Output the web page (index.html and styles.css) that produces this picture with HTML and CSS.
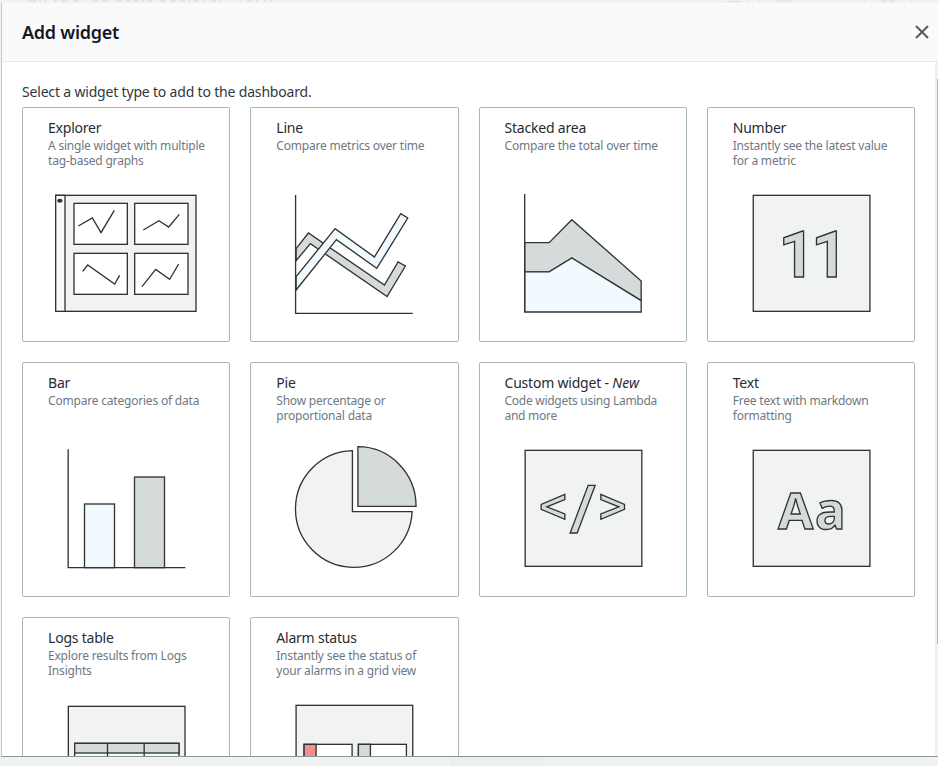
FILE: index.html
```html
<!DOCTYPE html>
<html lang="en">
<head>
<meta charset="utf-8">
<title>Add widget</title>
<link rel="stylesheet" href="styles.css">
</head>
<body>
<div class="page">
  <svg class="backdrop-top" viewBox="0 0 938 3" aria-hidden="true">
    <path d="M28 1h8M39 1h2M45 1h2M54 1h3M61 1h6M73 1h5M93 1h5M102 1h6M116 1h6M126 1h5M134 1h5M142 1h2M147 1h6M160 1h6M170 1h6M180 1h5M188 1h2M194 1h5M204 1h2M211 1h5M219 1h2M239 1h2M247 1h5M256 1h2M264 1h2M270 1h3"/>
    <path d="M727 1.5h14M777 1h14M881 1h6M889 1h6"/>
    <path class="thin" d="M748.500 0v2M759.500 0v2M806.500 0v2M853.500 0v2M864.500 0v2M911.500 0v2"/>
  </svg>
  <section class="modal" role="dialog" aria-label="Add widget">
    <header class="modal-header">
      <h1>Add widget</h1>
      <button class="close" aria-label="Close">
        <svg viewBox="0 0 16 16" width="16" height="16"><path d="M2 2l12 12M14 2L2 14"/></svg>
      </button>
    </header>
    <div class="modal-main">
      <div class="modal-body">
        <p class="intro">Select a widget type to add to the dashboard.</p>
        <div class="grid">
          <article class="card">
            <h2>Explorer</h2>
            <p>A single widget with multiple tag-based graphs</p>
            <svg class="art" viewBox="99 270 468 390">
              <rect class="pale" x="122" y="286" width="421" height="348"/>
              <rect class="offwhite" x="122" y="286" width="28" height="348"/>
              <ellipse class="dot" cx="134.500" cy="302" rx="8" ry="6"/>
              <g class="white"><rect x="177" y="310" width="160" height="123"/><rect x="359" y="310" width="160" height="123"/><rect x="177" y="460" width="160" height="123"/><rect x="359" y="460" width="160" height="123"/></g>
              <path class="line" d="M190 378l42-24 26 44 40-67M385 390l47-28 29 19 32-38M203 514l15-19 81 57 15-26M381 560l41-52 42 30 27-46"/>
            </svg>
          </article>
          <article class="card">
            <h2>Line</h2>
            <p>Compare metrics over time</p>
            <svg class="art" viewBox="99.750 270 468 390">
              <path class="grey" d="M160 446L197 399 425 555 466 486 488 498 433 590 203 431 160 482Z"/>
              <path class="blue" d="M160 530L277 386 395 471 474 341 495 354 402 505 281 419 160 570Z"/>
              <path class="line" d="M158.500 285V640H510"/>
            </svg>
          </article>
          <article class="card">
            <h2>Stacked area</h2>
            <p>Compare the total over time</p>
            <svg class="art" viewBox="105.500 270 468 390">
              <path class="grey" d="M164.500 428H238L306 359 514 543V602L306 474 238 515.500H164.500Z"/>
              <path class="blue" d="M164.500 515.500H238L306 474 514 602V636H164.500Z"/>
              <path class="line" d="M164.500 282V636"/>
            </svg>
          </article>
          <article class="card">
            <h2>Number</h2>
            <p>Instantly see the latest value for a metric</p>
            <svg class="art" viewBox="99.250 270 468 390">
              <rect class="pale" x="160" y="286" width="350" height="348"/>
              <text class="digits" x="236 334" y="530">11</text>
            </svg>
          </article>
          <article class="card">
            <h2>Bar</h2>
            <p>Compare categories of data</p>
            <svg class="art" viewBox="99 270 468 390">
              <rect class="blue" x="208.500" y="447" width="90" height="191"/>
              <rect class="grey" x="358.500" y="366" width="90" height="272"/>
              <path class="line" d="M159.500 283V638H511"/>
            </svg>
          </article>
          <article class="card">
            <h2>Pie</h2>
            <p>Show percentage or proportional data</p>
            <svg class="art" viewBox="99.750 270 468 390">
              <path class="pale" d="M329 287A175 175 0 1 0 508 470H329Z"/>
              <path class="grey" d="M345.500 275A175 179 0 0 1 520 454H345.500Z"/>
            </svg>
          </article>
          <article class="card">
            <h2>Custom widget - <em>New</em></h2>
            <p class="snug">Code widgets using Lambda and more</p>
            <svg class="art" viewBox="105.500 270 468 390">
              <rect class="pale" x="166" y="286" width="350" height="348"/>
              <path class="grey" d="M285 418L214 448V463L285 493V477L231 455.500 285 434ZM355 391H376L322 534H301ZM393 418L464 448V463L393 493V477L447 455.500 393 434Z"/>
            </svg>
          </article>
          <article class="card">
            <h2>Text</h2>
            <p>Free text with markdown formatting</p>
            <svg class="art" viewBox="99.250 270 468 390">
              <rect class="pale" x="160" y="286" width="350" height="348"/>
              <text class="letters" x="234 345" y="521">Aa</text>
            </svg>
          </article>
          <article class="card">
            <h2>Logs table</h2>
            <p>Explore results from Logs Insights</p>
            <svg class="art" viewBox="144 282 468 390">
              <rect class="pale" x="205" y="301" width="350" height="348"/>
              <rect class="blue" x="224" y="412" width="313" height="180"/>
              <rect class="grey" x="224" y="412" width="313" height="29"/>
              <path class="line" d="M322.500 412V592M432.500 412V592"/>
            </svg>
          </article>
          <article class="card">
            <h2>Alarm status</h2>
            <p>Instantly see the status of your alarms in a grid view</p>
            <svg class="art" viewBox="828.750 282 468 390">
              <rect class="pale" x="889" y="298" width="350" height="348"/>
              <g class="white"><rect x="913" y="415" width="144" height="70"/><rect x="1076" y="415" width="144" height="70"/></g>
              <rect class="red" x="913" y="415" width="36" height="70"/>
              <rect class="grey" x="1076" y="415" width="36" height="70"/>
            </svg>
          </article>
        </div>
      </div>
      <div class="track"><div class="thumb"></div></div>
    </div>
  </section>
  <div class="backdrop-bottom"><i class="edge"></i><i class="tint"></i></div>
</div>
</body>
</html>
```
FILE: styles.css
```css
* { box-sizing: border-box; }
body {
  margin: 0;
  background: #f1f3f3;
  font-family: "Noto Sans", "Open Sans", sans-serif;
  overflow: hidden;
}
.page { display: flex; flex-direction: column; height: 766px; }
.backdrop-top { display: block; flex: none; width: 938px; height: 3px; }
.backdrop-top path { stroke: #dfe2e2; stroke-width: 1.500; fill: none; }
.backdrop-top .thin { stroke-width: 1; }
.modal {
  display: flex;
  flex-direction: column;
  height: 754px;
  margin-left: 1px;
  border-left: 1px solid #c3cbcb;
  border-bottom: 1px solid #879596;
  background: #fff;
}
.modal-header {
  display: flex;
  flex: none;
  align-items: center;
  justify-content: space-between;
  height: 59px;
  padding: 0 8px 0 20px;
  background: #fafafa;
  border-bottom: 1px solid #e6e9e9;
}
h1 { margin: 0; color: #16191f; font-size: 18px; font-weight: 600; line-height: 22px; letter-spacing: -0.260px; }
.close { display: flex; padding: 0; border: 0; background: none; }
.close path { fill: none; stroke: #545b64; stroke-width: 2; }
.modal-main { display: flex; flex: 1; min-height: 0; }
.modal-body { flex: 1; overflow: hidden; padding: 19px 20px 0; }
.intro { margin: 0; height: 26px; color: #333840; font-size: 14px; line-height: 22px; letter-spacing: -0.180px; white-space: nowrap; }
.grid { display: grid; grid-template-columns: repeat(4, 208.250px); grid-auto-rows: 235px; gap: 20px; }
.card { padding: 10px 0 0 25px; border: 1px solid #aab7b8; border-radius: 2px; background: #fff; }
h2 { margin: 0; color: #272c33; font-size: 14px; font-weight: 400; line-height: 20px; letter-spacing: -0.210px; white-space: nowrap; }
h2 em { letter-spacing: 0.100px; }
.card p { width: 166px; height: 52px; margin: 0; color: #6f7883; font-size: 12px; line-height: 15px; letter-spacing: -0.200px; }
.card .snug { letter-spacing: -0.270px; }
.art { display: block; width: 156px; height: 130px; stroke: #333; stroke-width: 4; }
.pale { fill: #f1f3f3; }
.offwhite { fill: #fafafa; }
.white { fill: #fff; }
.grey { fill: #d5dbdb; }
.blue { fill: #f1faff; }
.red { fill: #f08f8f; }
.line { fill: none; }
.dot { fill: #333; stroke: none; }
.digits, .letters { fill: #d5dbdb; font-weight: 700; }
.digits { font-family: Roboto, "Noto Sans", sans-serif; font-size: 192px; }
.letters { font-size: 153px; }
.track { flex: none; width: 3px; padding: 17px 0 0 2px; background: #f1f1f1; }
.thumb { width: 1px; height: 565px; background: #b5b5b5; }
.backdrop-bottom { display: flex; justify-content: space-between; height: 9px; padding-right: 395px; }
.edge { width: 26px; border-right: 1px solid #eceeee; }
.tint { width: 93px; background: #ebeff0; }
```
